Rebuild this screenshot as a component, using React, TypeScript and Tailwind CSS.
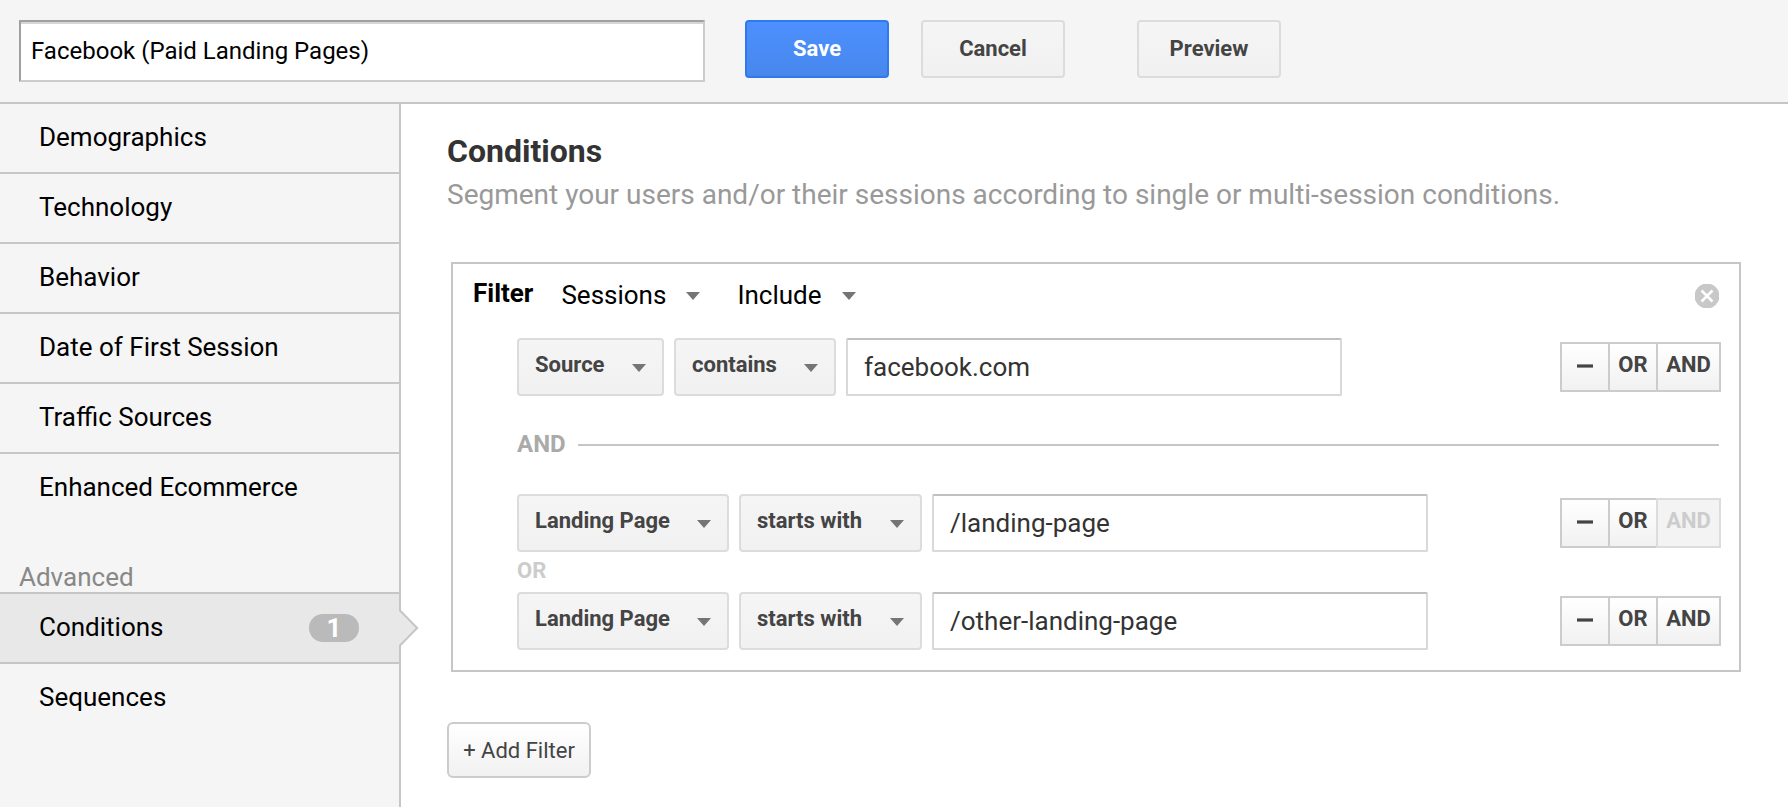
import type { ReactNode } from "react";

const cx = (...parts: string[]) => parts.join(" ");

function Caret({ className = "" }: { className?: string }) {
  return (
    <svg
      aria-hidden="true"
      viewBox="0 0 14 8"
      className={cx("pointer-events-none mt-0.5 h-2 w-3.5 fill-[#757575]", className)}
    >
      <path d="M0 0h14L7 8z" />
    </svg>
  );
}

function HeaderButton({ children, primary = false }: { children: ReactNode; primary?: boolean }) {
  return (
    <button
      type="button"
      className={cx(
        "h-[58px] w-36 shrink-0 rounded-[4px] border-2 pb-0.5 text-[22px] font-bold",
        primary
          ? "border-[#3079ed] bg-linear-to-b from-[#4d90fe] to-[#4787ed] text-white"
          : "border-[#dcdcdc] bg-linear-to-b from-[#f5f5f5] to-[#f1f1f1] text-[#444]",
      )}
    >
      {children}
    </button>
  );
}

function TextSelect({ label, value }: { label: string; value: string }) {
  return (
    <span className="grid items-center">
      <select
        aria-label={label}
        className="col-start-1 row-start-1 appearance-none bg-transparent pr-[34px] text-[26px] leading-8 text-black"
      >
        <option>{value}</option>
      </select>
      <Caret className="col-start-1 row-start-1 justify-self-end" />
    </span>
  );
}

function BoxSelect({ label, value }: { label: string; value: string }) {
  return (
    <span className="grid shrink-0 items-center">
      <select
        aria-label={label}
        className="col-start-1 row-start-1 h-[58px] appearance-none rounded-[4px] border-2 border-[#dcdcdc] bg-linear-to-b from-[#f5f5f5] to-[#f1f1f1] pr-[57px] pb-1.5 pl-4 text-[22px] font-bold text-[#444]"
      >
        <option>{value}</option>
      </select>
      <Caret className="col-start-1 row-start-1 mr-[18px] justify-self-end" />
    </span>
  );
}

const segment =
  "h-[50px] border-2 border-[#ccc] bg-linear-to-b from-white to-[#f1f1f1] pb-1.5 text-[22px] font-bold text-[#444]";

function ConditionRow({
  field,
  operator,
  value,
  andDisabled = false,
}: {
  field: string;
  operator: string;
  value: string;
  andDisabled?: boolean;
}) {
  return (
    <div className="flex items-center gap-2.5 pr-[18px] pl-16">
      <BoxSelect label="Dimension" value={field} />
      <BoxSelect label="Match type" value={operator} />
      <input
        aria-label="Value"
        defaultValue={value}
        className="h-[58px] w-full max-w-[496px] min-w-0 rounded-[2px] border-2 border-[#d9d9d9] border-t-[#c0c0c0] bg-white px-4 text-[26px] text-[#333]"
      />
      <div className="ml-auto flex shrink-0">
        <button
          type="button"
          aria-label="Remove condition"
          className={cx(segment, "flex w-[50px] items-center justify-center")}
        >
          <svg aria-hidden="true" viewBox="0 0 16 4" className="mt-1 h-1 w-4 fill-[#444]">
            <path d="M0 .4h16v3.200H0z" />
          </svg>
        </button>
        <button type="button" className={cx(segment, "-ml-0.5 w-[50px]")}>
          OR
        </button>
        <button
          type="button"
          disabled={andDisabled}
          className={cx(
            segment,
            "-ml-0.5 w-[65px] disabled:border-[#dcdcdc] disabled:from-[#f3f3f3] disabled:to-[#f3f3f3] disabled:text-[#ccc]",
          )}
        >
          AND
        </button>
      </div>
    </div>
  );
}

const navItem = "flex h-[68px] items-center pr-10 pb-0.5 pl-[39px] text-[26px] text-black";
const topics = [
  "Demographics",
  "Technology",
  "Behavior",
  "Date of First Session",
  "Traffic Sources",
  "Enhanced Ecommerce",
];

function Sidebar() {
  return (
    <nav className="w-[401px] shrink-0 border-r-2 border-[#c6c6c6] bg-[#f5f5f5]">
      <ul className="divide-y-2 divide-[#c6c6c6]">
        {topics.map((topic) => (
          <li key={topic}>
            <a href="#" className={navItem}>
              {topic}
            </a>
          </li>
        ))}
      </ul>
      <h2 className="flex h-[70px] items-end pl-[19px] text-[26px] leading-[30px] text-[#888]">
        Advanced
      </h2>
      <ul>
        <li className="relative border-y-2 border-[#c6c6c6] bg-[#e8e8e8]">
          <a href="#" aria-current="page" className={navItem}>
            Conditions
            <span className="mt-0.5 ml-auto flex h-7 w-[50px] items-center justify-center rounded-full bg-[#bababa] text-[26px] font-bold text-white">
              1
            </span>
          </a>
          <svg
            aria-hidden="true"
            viewBox="0 0 20 38"
            className="absolute top-[15px] left-full h-[38px] w-5"
          >
            <path d="M0 1.500 17.800 19 0 36.500z" fill="#e8e8e8" />
            <path d="M1 1.500 18.200 19 1 36.500" fill="none" stroke="#c6c6c6" strokeWidth="2" />
          </svg>
        </li>
        <li>
          <a href="#" className={navItem}>
            Sequences
          </a>
        </li>
      </ul>
    </nav>
  );
}

function FilterPanel() {
  return (
    <section className="mt-[42px] ml-1 border-2 border-[#c6c6c6] pb-5">
      <div className="flex h-[62px] items-center px-5">
        <h3 className="mr-7 pb-1 text-[26px] leading-8 font-bold text-black">Filter</h3>
        <div className="flex gap-[37px]">
          <TextSelect label="Scope" value="Sessions" />
          <TextSelect label="Inclusion" value="Include" />
        </div>
        <button type="button" aria-label="Remove filter" className="mt-0.5 ml-auto">
          <svg aria-hidden="true" viewBox="0 0 24 24" className="size-6">
            <circle cx="12" cy="12" r="12.500" fill="#c8c8c8" />
            <path d="m6.500 6.500 11 11m0-11-11 11" stroke="#fff" strokeWidth="2.500" />
          </svg>
        </button>
      </div>
      <div className="mt-3">
        <ConditionRow field="Source" operator="contains" value="facebook.com" />
        <div className="flex h-[98px] items-center gap-3 pr-5 pl-16 text-[24px] font-bold text-[#aaa]">
          <span className="pb-0.5">AND</span>
          <span className="h-0.5 flex-1 bg-[#c6c6c6]" />
        </div>
        <ConditionRow field="Landing Page" operator="starts with" value="/landing-page" andDisabled />
        <div className="flex h-10 items-center pb-1 pl-16 text-[22px] font-bold text-[#ccc]">
          OR
        </div>
        <ConditionRow field="Landing Page" operator="starts with" value="/other-landing-page" />
      </div>
    </section>
  );
}

export default function App() {
  return (
    <div className="flex min-h-screen flex-col bg-white font-['Roboto',sans-serif]">
      <header className="flex items-start border-b-2 border-[#c6c6c6] bg-[#f5f5f5] px-[19px] py-5">
        <input
          aria-label="Segment name"
          defaultValue="Facebook (Paid Landing Pages)"
          className="h-[62px] w-full max-w-[686px] min-w-0 border-2 border-[#ccc] border-t-[#a0a0a0] border-l-[#a0a0a0] bg-white px-2.5 text-[24px] text-black shadow-[inset_0_2px_0_#d6d6d6]"
        />
        <div className="ml-10 flex gap-8">
          <HeaderButton primary>Save</HeaderButton>
          <HeaderButton>Cancel</HeaderButton>
        </div>
        <div className="ml-[72px]">
          <HeaderButton>Preview</HeaderButton>
        </div>
      </header>
      <div className="flex flex-1">
        <Sidebar />
        <main className="min-w-0 flex-1 pt-7 pr-[47px] pb-7 pl-[46px]">
          <h1 className="text-[32px] leading-[38px] font-bold text-[#333]">Conditions</h1>
          <p className="text-[28px] leading-[50px] text-[#999]">
            Segment your users and/or their sessions according to single or multi-session conditions.
          </p>
          <FilterPanel />
          <button
            type="button"
            className="mt-[50px] h-14 w-36 rounded-md border-2 border-[#ccc] bg-linear-to-b from-white to-[#f1f1f1] text-[22px] text-[#444]"
          >
            + Add Filter
          </button>
        </main>
      </div>
    </div>
  );
}
